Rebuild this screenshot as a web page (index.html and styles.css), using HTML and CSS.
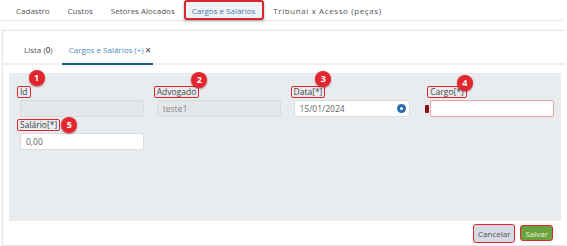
FILE: index.html
```html
<!DOCTYPE html>
<html lang="pt-BR">
<head>
    <meta charset="UTF-8">
    <meta name="viewport" content="width=device-width, initial-scale=1.0">
    <title>Cargos e Salários</title>
    <link rel="stylesheet" href="styles.css">
</head>
<body>
    <nav class="top-tabs">
        <a class="top-tab">Cadastro</a>
        <a class="top-tab">Custos</a>
        <a class="top-tab">Setores Alocados</a>
        <a class="top-tab active">Cargos e Salários</a>
        <a class="top-tab wide">Tribunal x Acesso (peças)</a>
    </nav>

    <div class="page">
        <div class="card">
            <div class="inner-tabs">
                <a class="inner-tab">Lista (<b>0</b>)</a>
                <a class="inner-tab active">Cargos e Salários (+) <span class="close">✕</span></a>
            </div>

            <div class="form-panel">
                <div class="field">
                    <label class="mark">Id<span class="badge b1">1</span></label>
                    <input type="text" class="input" disabled>
                </div>
                <div class="field">
                    <label class="mark">Advogado<span class="badge b2">2</span></label>
                    <input type="text" class="input" value="teste1" disabled>
                </div>
                <div class="field">
                    <label class="mark">Data[*]<span class="badge b3">3</span></label>
                    <div class="input-wrap date">
                        <input type="text" class="input" value="15/01/2024">
                        <span class="date-icon"></span>
                    </div>
                </div>
                <div class="field">
                    <label class="mark">Cargo[*]<span class="badge b4">4</span></label>
                    <div class="input-wrap">
                        <span class="req-marker"></span>
                        <input type="text" class="input invalid">
                    </div>
                </div>
                <div class="field">
                    <label class="mark">Salário[*]<span class="badge b5">5</span></label>
                    <input type="text" class="input" value="0,00">
                </div>
            </div>

            <div class="footer">
                <button class="btn btn-cancel">Cancelar</button>
                <button class="btn btn-save">Salvar</button>
            </div>
        </div>
    </div>
</body>
</html>
```

FILE: styles.css
```css
/* Estilos gerais */
body {
    margin: 0;
    font-family: "Open Sans", "DejaVu Sans", sans-serif;
    font-size: 8px;
    color: #555;
    background: #fff;
}

/* Abas superiores */
.top-tabs {
    display: flex;
    height: 20px;
    border-bottom: 1px solid #e6e6e6;
    margin-right: 4px;
    padding-left: 7px;
}

.top-tab {
    display: flex;
    align-items: center;
    padding: 0 9px;
    color: #555;
}

.top-tab.active {
    background: #f1f2f4;
    color: #3f7cb0;
    border: 2px solid #d8262c;
    border-radius: 3px;
    box-shadow: 0 1px 3px rgba(0, 0, 0, 0.35);
    padding: 0 7px 0 6px;
}

.top-tab.wide {
    letter-spacing: 0.6px;
}

.page {
    padding: 9px 2px 0 2px;
}

.card {
    border: 1px solid #e5e5e5;
    border-right: none;
    box-shadow: 0 0 2px rgba(0, 0, 0, 0.06);
    height: 214px;
    display: flex;
    flex-direction: column;
}

/* Abas internas */
.inner-tabs {
    display: flex;
    height: 32px;
    padding-left: 12px;
    border-bottom: 2px solid #f0f0f0;
}

.inner-tab {
    display: flex;
    align-items: center;
    padding: 5px 9px 0;
    color: #555;
    border-bottom: 2px solid transparent;
    margin-bottom: -2px;
}

.inner-tab b {
    font-weight: 600;
}

.inner-tab.active {
    color: #4c8dbd;
    border-bottom-color: #1e5f8e;
    padding: 5px 2px 0 7px;
}

.close {
    color: #444;
    font-size: 8px;
    margin-left: 1px;
}

/* Formulário */
.form-panel {
    background: #e9ecef;
    margin: 8px 4px 0 6px;
    padding: 13px 7px 0 11px;
    flex: 1;
    display: grid;
    grid-template-columns: repeat(4, 1fr);
    column-gap: 13px;
    row-gap: 2px;
    align-content: start;
}

.field {
    display: flex;
    flex-direction: column;
    align-items: flex-start;
}

.mark {
    position: relative;
    color: #444;
    font-size: 8.5px;
    line-height: 10px;
    padding: 0 2px;
    margin-left: -3px;
    border: 1px solid #e0262c;
    border-radius: 2px;
    margin-bottom: 2px;
}

.badge {
    position: absolute;
    width: 16px;
    height: 16px;
    border-radius: 50%;
    background: #e3262d;
    box-shadow: 0 1px 2px rgba(120, 0, 0, 0.5);
    color: #fff;
    font-size: 9px;
    font-weight: 700;
    line-height: 16px;
    text-align: center;
}

.b1 { left: calc(100% - 1px); top: -17px; }
.b2 { left: calc(100% - 7px); top: -15px; }
.b3 { left: calc(100% - 9px); top: -16px; }
.b4 { left: calc(100% - 9px); top: -12px; }
.b5 { left: calc(100% + 2px); top: -3px; }

.input-wrap {
    position: relative;
    width: 100%;
}

.input-wrap.date {
    width: calc(100% - 7px);
}

.input {
    box-sizing: border-box;
    width: 100%;
    height: 17px;
    border: 1px solid #d9dde0;
    border-radius: 2px;
    background: #fff;
    font-family: inherit;
    font-size: 8.5px;
    color: #666;
    padding: 0 5px;
}

.input:disabled {
    background: #e4e7ea;
    color: #888;
}

.input.invalid {
    border-color: #f0a3a5;
}

.date-icon {
    position: absolute;
    right: 4px;
    top: 4px;
    width: 9px;
    height: 9px;
    border-radius: 50%;
    background: #2a6bab;
}

.date-icon::after {
    content: "";
    position: absolute;
    left: 3px;
    top: 3px;
    width: 3px;
    height: 3px;
    border-radius: 50%;
    background: #fff;
}

.req-marker {
    position: absolute;
    left: -5px;
    top: 5px;
    width: 4px;
    height: 8px;
    border-radius: 1px;
    background: #8c0d12;
}

/* Rodapé */
.footer {
    height: 24px;
    display: flex;
    align-items: center;
    justify-content: flex-end;
    gap: 5px;
    padding-right: 12px;
}

.btn {
    font-family: inherit;
    font-size: 8px;
    border: 1.5px solid #e0262c;
    border-radius: 3px;
    cursor: pointer;
    padding: 0 4px;
}

.btn-cancel {
    background: #d8dae6;
    color: #555;
    height: 19px;
}

.btn-save {
    background: #6aa33d;
    color: #eef7dd;
    height: 16px;
}
```
